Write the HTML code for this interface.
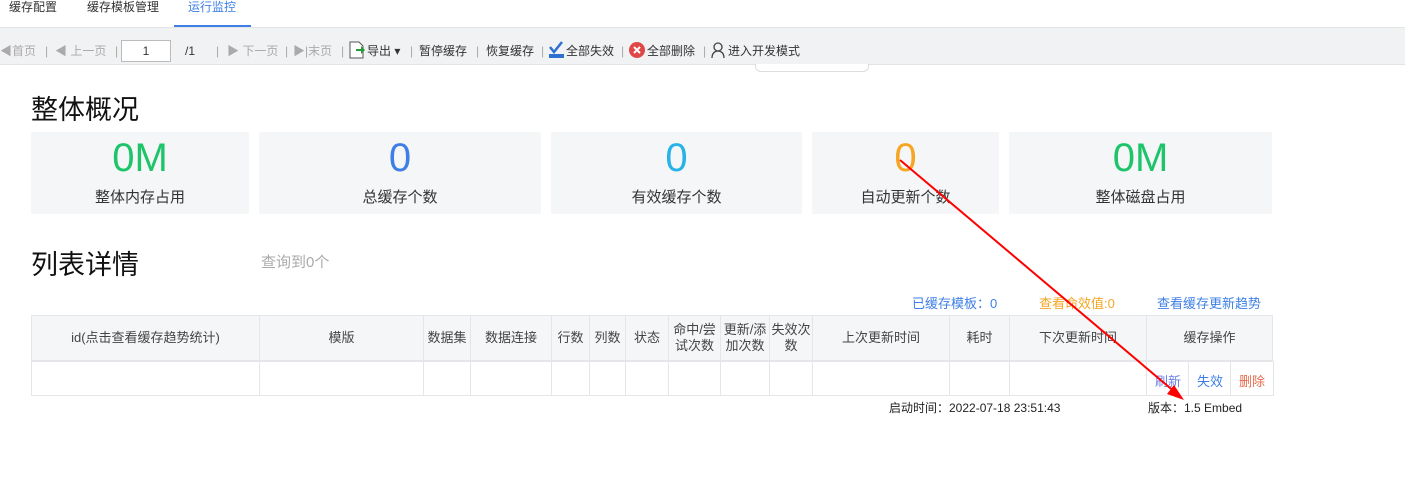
<!DOCTYPE html><html><head><meta charset="utf-8"><style>
body{margin:0;width:1405px;height:498px;background:#fff;font-family:"Liberation Sans","Noto Sans CJK SC",sans-serif;position:relative;overflow:hidden;color:#333}
.a{position:absolute;white-space:nowrap}
.card{position:absolute;top:132px;height:82px;background:#f5f6f8;text-align:center}
.card .n{font-size:40px;line-height:40px;margin-top:6px}
.card .t{font-size:15px;color:#333;margin-top:8px}
table{position:absolute;left:31px;top:315px;border-collapse:collapse;font-size:13px;color:#444;table-layout:fixed}
td{border:1px solid #e4e6ea;text-align:center;padding:0;line-height:16px}
tr.h td{background:#f5f6f8;height:44px;border-bottom:2px solid #e4e6ea}
.tb{font-size:12px;color:#333;top:43px;line-height:16px}
.g{color:#aaa}
.v{position:absolute;top:361px;height:34px;border-left:1px solid #e4e6ea}
</style></head><body>
<div class="a" style="left:0;top:0;width:1405px;height:27px;border-bottom:1px solid #e5e5e5"></div>
<div class="a" style="left:9px;top:0;font-size:12px;line-height:14px">缓存配置</div>
<div class="a" style="left:87px;top:0;font-size:12px;line-height:14px">缓存模板管理</div>
<div class="a" style="left:188px;top:0;font-size:12px;line-height:14px;color:#3d7fe6">运行监控</div>
<div class="a" style="left:174px;top:25px;width:77px;height:2px;background:#3d7fe6"></div>
<div class="a" style="left:0;top:28px;width:1405px;height:36px;background:#f1f2f4;border-bottom:1px solid #e2e3e6"></div>
<div class="a" style="left:755px;top:64px;width:112px;height:7px;background:#fff;border:1px solid #ddd;border-top:none;border-radius:0 0 6px 6px"></div>
<div class="a tb g" style="left:0">◀首页</div>
<div class="a tb g" style="left:45px">|</div>
<div class="a tb g" style="left:55px">◀ 上一页</div>
<div class="a tb g" style="left:115px">|</div>
<div class="a" style="left:121px;top:40px;width:48px;height:20px;border:1px solid #bbb;background:#fff;font-size:12px;text-align:center;line-height:20px">1</div>
<div class="a tb" style="left:185px">/1</div>
<div class="a tb g" style="left:216px">|</div>
<div class="a tb g" style="left:227px">▶ 下一页</div>
<div class="a tb g" style="left:285px">|</div>
<div class="a tb g" style="left:293px">▶|末页</div>
<div class="a tb g" style="left:341px">|</div>
<svg class="a" style="left:349px;top:41px" width="16" height="18"><path d="M1 1h9l4 4v12H1z" fill="#fff" stroke="#555"/><path d="M7 8h5V5l4 4-4 4v-3H7z" fill="#2a9a3a"/></svg>
<div class="a tb" style="left:367px">导出 ▾</div>
<div class="a tb g" style="left:410px">|</div>
<div class="a tb" style="left:419px">暂停缓存</div>
<div class="a tb g" style="left:476px">|</div>
<div class="a tb" style="left:486px">恢复缓存</div>
<div class="a tb g" style="left:541px">|</div>
<svg class="a" style="left:548px;top:41px" width="17" height="18"><path d="M2 6l4 5 8-10" fill="none" stroke="#2f6fd0" stroke-width="2.5"/><rect x="1" y="13" width="15" height="4" fill="#2f6fd0"/></svg>
<div class="a tb" style="left:566px">全部失效</div>
<div class="a tb g" style="left:621px">|</div>
<svg class="a" style="left:629px;top:42px" width="16" height="16"><circle cx="8" cy="8" r="8" fill="#e04848"/><path d="M5 5l6 6M11 5l-6 6" stroke="#fff" stroke-width="2"/></svg>
<div class="a tb" style="left:647px">全部删除</div>
<div class="a tb g" style="left:703px">|</div>
<svg class="a" style="left:711px;top:42px" width="14" height="16"><circle cx="7" cy="5" r="4" fill="none" stroke="#444" stroke-width="1.3"/><path d="M1 16c0-5 3-7 6-7s6 2 6 7" fill="none" stroke="#444" stroke-width="1.3"/></svg>
<div class="a tb" style="left:728px">进入开发模式</div>
<div class="a" style="left:31px;top:88px;font-size:27px;color:#111">整体概况</div>
<div class="card" style="left:31px;width:218px"><div class="n" style="color:#1ec46a">0M</div><div class="t">整体内存占用</div></div>
<div class="card" style="left:259px;width:282px"><div class="n" style="color:#3d7fe6">0</div><div class="t">总缓存个数</div></div>
<div class="card" style="left:551px;width:251px"><div class="n" style="color:#28b3e8">0</div><div class="t">有效缓存个数</div></div>
<div class="card" style="left:812px;width:187px"><div class="n" style="color:#f5a623">0</div><div class="t">自动更新个数</div></div>
<div class="card" style="left:1009px;width:263px"><div class="n" style="color:#1ec46a">0M</div><div class="t">整体磁盘占用</div></div>
<div class="a" style="left:31px;top:243px;font-size:27px;color:#111">列表详情</div>
<div class="a" style="left:261px;top:251px;font-size:15px;color:#aaa">查询到0个</div>
<div class="a" style="left:912px;top:293px;font-size:13px;color:#3d7fe6">已缓存模板：0</div>
<div class="a" style="left:1039px;top:293px;font-size:13px;color:#f5a623">查看命效值:0</div>
<div class="a" style="left:1157px;top:293px;font-size:13px;color:#3d7fe6">查看缓存更新趋势</div>
<table><colgroup><col style="width:228px"><col style="width:164px"><col style="width:47px"><col style="width:81px"><col style="width:38px"><col style="width:36px"><col style="width:43px"><col style="width:52px"><col style="width:49px"><col style="width:43px"><col style="width:137px"><col style="width:60px"><col style="width:137px"><col style="width:126px"></colgroup>
<tr class="h"><td>id(点击查看缓存趋势统计)</td><td>模版</td><td>数据集</td><td>数据连接</td><td>行数</td><td>列数</td><td>状态</td><td>命中/尝试次数</td><td>更新/添加次数</td><td>失效次数</td><td>上次更新时间</td><td>耗时</td><td>下次更新时间</td><td>缓存操作</td></tr></table>
<div class="a" style="left:31px;top:361px;width:1241px;height:34px;border:1px solid #e4e6ea;border-top:none"></div>
<div class="v" style="left:259px"></div><div class="v" style="left:423px"></div><div class="v" style="left:470px"></div><div class="v" style="left:551px"></div><div class="v" style="left:589px"></div><div class="v" style="left:625px"></div><div class="v" style="left:668px"></div><div class="v" style="left:720px"></div><div class="v" style="left:769px"></div><div class="v" style="left:812px"></div><div class="v" style="left:949px"></div><div class="v" style="left:1009px"></div><div class="v" style="left:1146px"></div><div class="v" style="left:1188px"></div><div class="v" style="left:1230px"></div>
<div class="a" style="left:1155px;top:371px;font-size:13px;color:#6b7fe6">刷新</div>
<div class="a" style="left:1197px;top:371px;font-size:13px;color:#3d7fe6">失效</div>
<div class="a" style="left:1239px;top:371px;font-size:13px;color:#e86a4a">删除</div>
<div class="a" style="left:889px;top:399px;font-size:12px;color:#222">启动时间：2022-07-18 23:51:43</div>
<div class="a" style="left:1148px;top:399px;font-size:12px;color:#222">版本：1.5 Embed</div>
<svg class="a" style="left:0;top:0" width="1405" height="498"><line x1="900" y1="160" x2="1176" y2="393" stroke="#f00" stroke-width="2"/><polygon points="1184,400 1167,394 1174,385" fill="#f00"/></svg>
</body></html>
